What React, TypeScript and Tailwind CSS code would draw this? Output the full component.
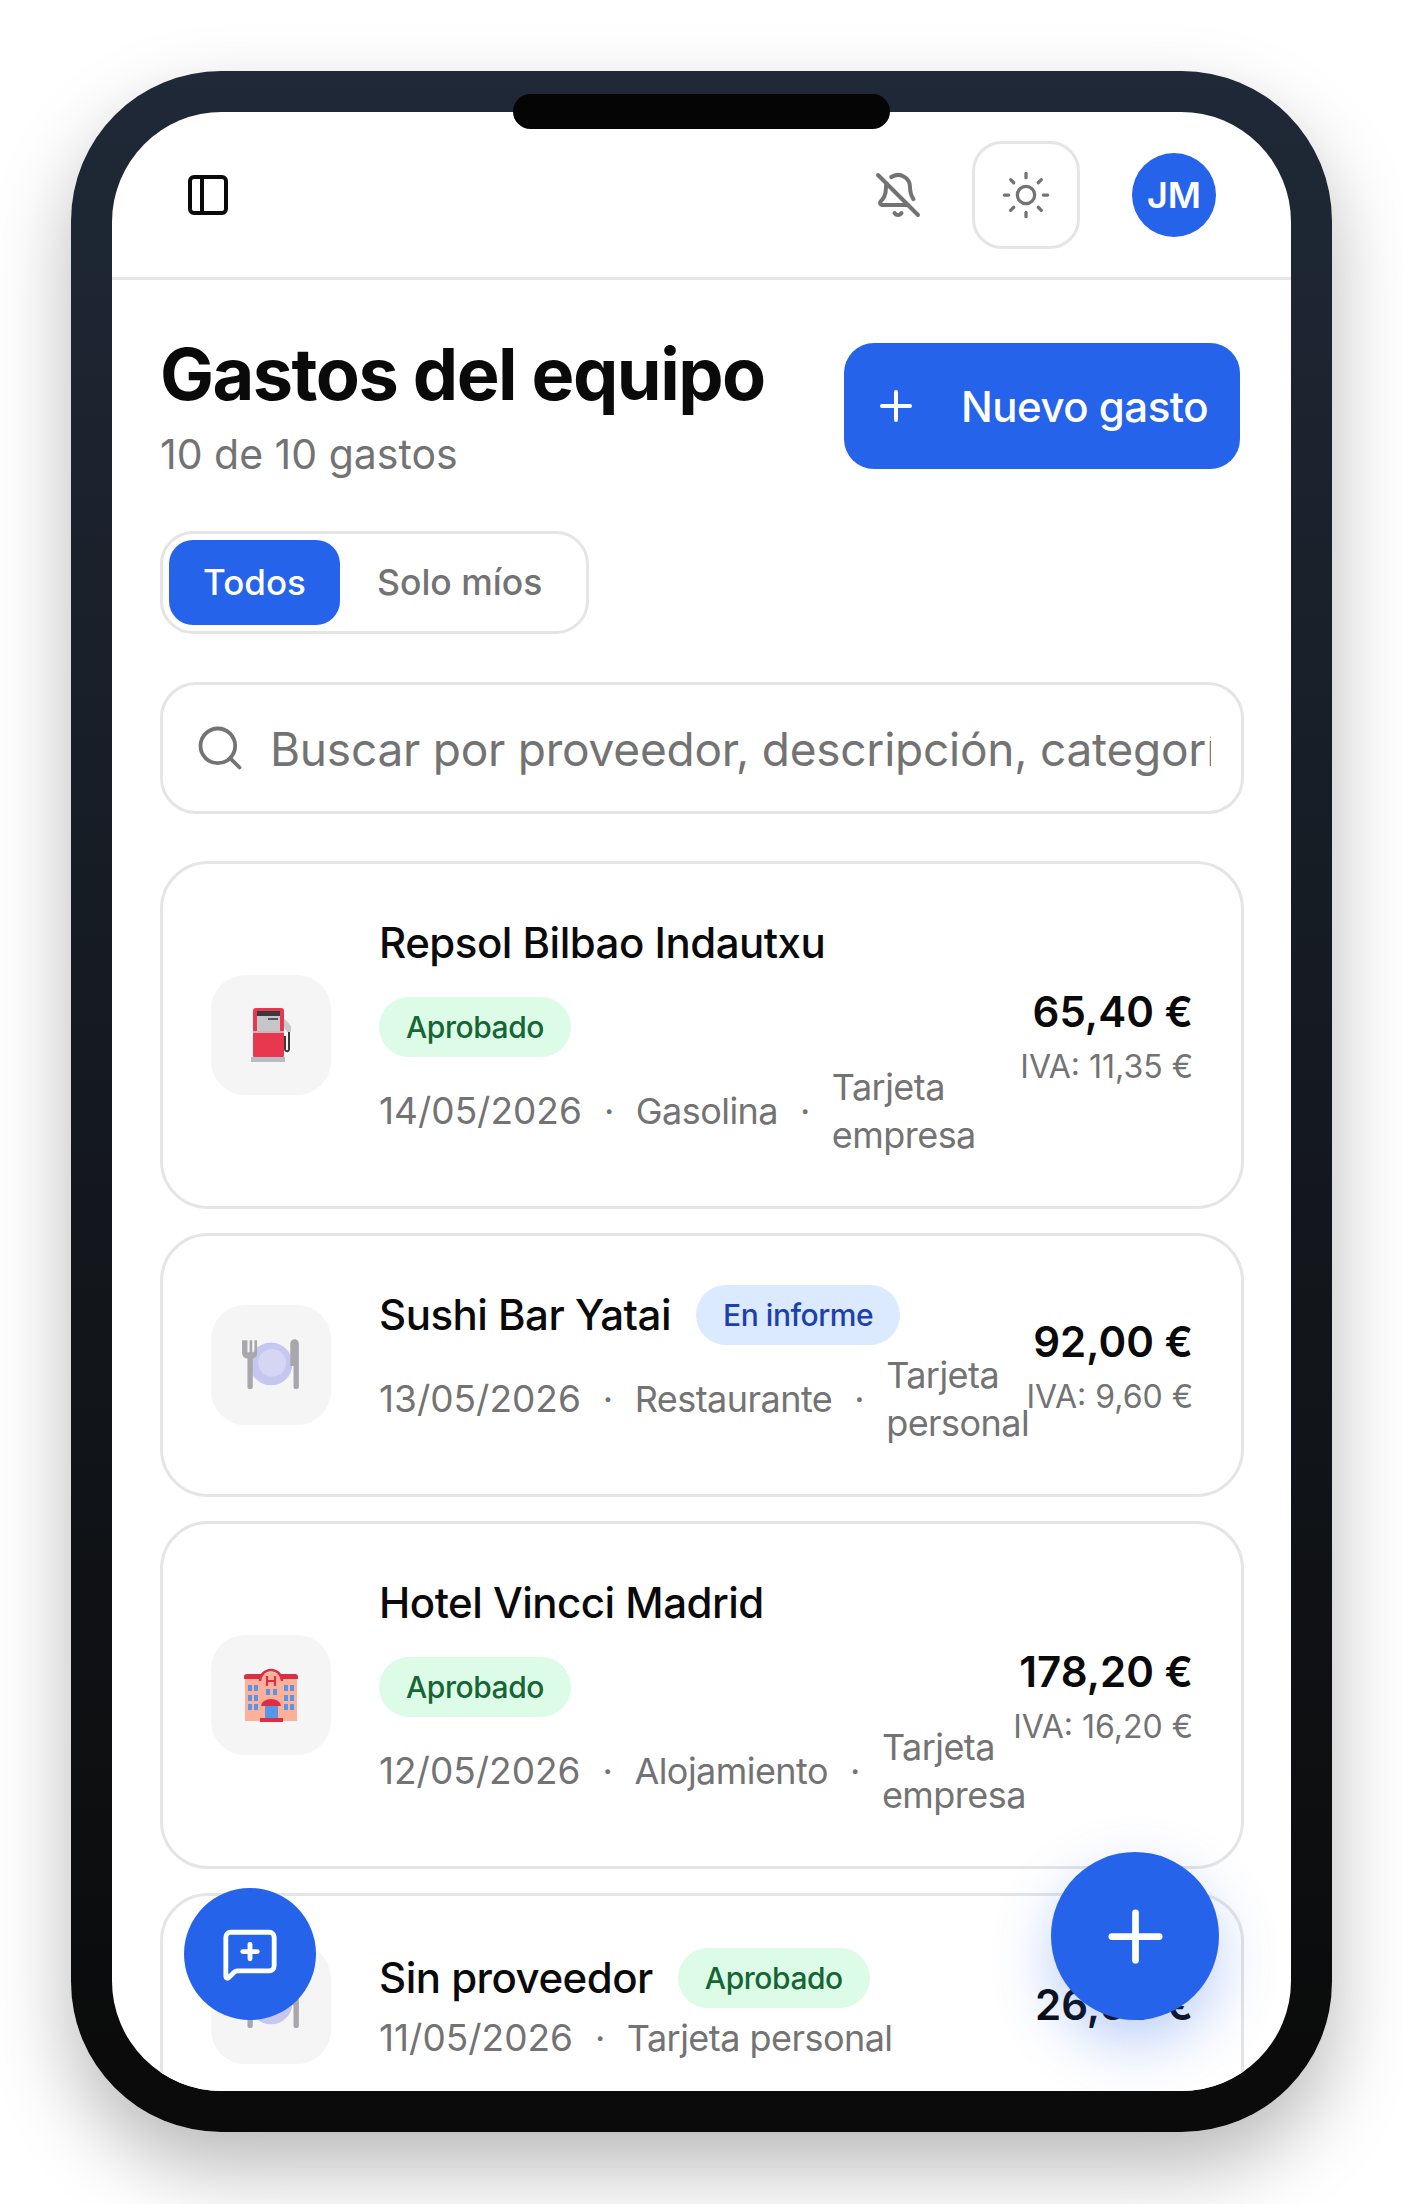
import { BellOff, MessageSquarePlus, PanelLeft, Plus, Search, Sun } from "lucide-react";

function PumpIcon() {
  return (
    <svg viewBox="0 0 42 56" className="h-[56px] w-[42px] translate-x-[1px]">
      <rect x="2" y="1" width="31" height="50" rx="3" fill="#e8384f" />
      <rect x="6" y="4" width="23" height="5" fill="#3a3a3c" />
      <rect x="6" y="9" width="23" height="15" fill="#c4c6ca" />
      <rect x="17" y="11" width="10" height="2" fill="#55565a" />
      <rect x="2" y="24" width="31" height="2" fill="#c9b3b5" />
      <rect y="50" width="34" height="5" fill="#b9bcc2" />
      <path d="M33 11l7 8v6h-4l-3-5z" fill="#c8cace" />
      <path d="M38 25v17a2 2 0 0 1-3 2 2 2 0 0 1-1-2V30h-1" fill="none" stroke="#3a3a3c" strokeWidth="2" />
    </svg>
  );
}

function PlateIcon() {
  return (
    <svg viewBox="0 0 56 50" className="h-[54px] w-[60px]">
      <circle cx="28" cy="24" r="20" fill="#c5c7ef" />
      <circle cx="29" cy="23" r="13" fill="#d4d6f4" />
      <path d="M1 2v12a5 5 0 0 0 5 5v26a2.500 2.500 0 0 0 5 0V19a5 5 0 0 0 4-5V2h-2.500v11h-2V2H8v11H6V2z" fill="#a8a8ac" />
      <path d="M46 5a4 4 0 0 1 8 0v40a2.500 2.500 0 0 1-5 0V26h-3z" fill="#a8a8ac" />
    </svg>
  );
}

function HotelIcon() {
  return (
    <svg viewBox="0 0 56 56" className="h-[56px] w-[56px]">
      <rect x="2" y="8" width="52" height="46" fill="#ffb09a" />
      <path d="M1 10a3 3 0 0 1 3-3h48a3 3 0 0 1 3 3v2H1z" fill="#db2f45" />
      <path d="M17 16a11 11 0 0 1 22 0v38H17z" fill="#ffb09a" />
      <path d="M17 14a11 11 0 0 1 22 0" fill="none" stroke="#db2f45" strokeWidth="2.500" />
      <path d="M24 9v10M32 9v10M24 14h8" stroke="#db2f45" strokeWidth="2.200" fill="none" />
      <rect x="5" y="18" width="4" height="6" fill="#5596e6" />
      <rect x="11" y="18" width="4" height="6" fill="#5596e6" />
      <rect x="5" y="28" width="4" height="6" fill="#5596e6" />
      <rect x="11" y="28" width="4" height="6" fill="#5596e6" />
      <rect x="5" y="37" width="4" height="6" fill="#5596e6" />
      <rect x="11" y="37" width="4" height="6" fill="#5596e6" />
      <rect x="41" y="18" width="4" height="6" fill="#5596e6" />
      <rect x="47" y="18" width="4" height="6" fill="#5596e6" />
      <rect x="41" y="28" width="4" height="6" fill="#5596e6" />
      <rect x="47" y="28" width="4" height="6" fill="#5596e6" />
      <rect x="41" y="37" width="4" height="6" fill="#5596e6" />
      <rect x="47" y="37" width="4" height="6" fill="#5596e6" />
      <rect x="23" y="22" width="4" height="6" fill="#5596e6" />
      <rect x="30" y="22" width="4" height="6" fill="#5596e6" />
      <rect x="22" y="38" width="13" height="14" fill="#5596e6" />
      <path d="M18 39a10 7 0 0 1 20 0z" fill="#db2f45" />
      <rect x="17" y="51" width="23" height="4" fill="#db2f45" />
    </svg>
  );
}

const expenses = [
  {
    vendor: "Repsol Bilbao Indautxu",
    status: "Aprobado",
    date: "14/05/2026",
    category: "Gasolina",
    payment: "Tarjeta empresa",
    amount: "65,40 €",
    vat: "IVA: 11,35 €",
    icon: <PumpIcon />,
    stacked: true,
  },
  {
    vendor: "Sushi Bar Yatai",
    status: "En informe",
    date: "13/05/2026",
    category: "Restaurante",
    payment: "Tarjeta personal",
    amount: "92,00 €",
    vat: "IVA: 9,60 €",
    icon: <PlateIcon />,
    stacked: false,
  },
  {
    vendor: "Hotel Vincci Madrid",
    status: "Aprobado",
    date: "12/05/2026",
    category: "Alojamiento",
    payment: "Tarjeta empresa",
    amount: "178,20 €",
    vat: "IVA: 16,20 €",
    icon: <HotelIcon />,
    stacked: true,
  },
  {
    vendor: "Sin proveedor",
    status: "Aprobado",
    date: "11/05/2026",
    category: "",
    payment: "Tarjeta personal",
    amount: "26,50 €",
    vat: "",
    icon: <PlateIcon />,
    stacked: false,
  },
];

function StatusBadge({ status }: { status: string }) {
  const approved = status === "Aprobado";
  return (
    <span
      className={`inline-flex h-[60px] shrink-0 items-center rounded-full px-[27px] text-[30px] font-medium tracking-[-0.015em] ${
        approved ? "bg-[#dcfce7] text-[#166534]" : "bg-[#dbeafe] text-[#1e40af]"
      }`}
    >
      {status}
    </span>
  );
}

function ExpenseCard({ item }: { item: (typeof expenses)[number] }) {
  return (
    <div className="flex shrink-0 items-center gap-[48px] rounded-[48px] border-[3px] border-[#e5e5e5] bg-white p-[48px]">
      <div className="flex h-[120px] w-[120px] shrink-0 items-center justify-center rounded-[34px] bg-[#f5f5f5]">
        {item.icon}
      </div>

      <div className="min-w-0 flex-1 translate-y-px">
        <div className={`flex ${item.stacked ? "flex-col items-start gap-[24px]" : "items-center gap-[25px]"}`}>
          <h3 className="text-[42px] leading-[60px] font-medium tracking-[-0.012em] whitespace-nowrap text-[#0a0a0a]">
            {item.vendor}
          </h3>
          <StatusBadge status={item.status} />
        </div>
        <div className="mt-[6px] flex items-center gap-[22px] text-[36px] leading-[48px] tracking-[-0.015em] text-[#737373]">
          <span className="text-[37px] tracking-normal whitespace-nowrap">{item.date}</span>
          <span>·</span>
          {item.category && <span className="whitespace-nowrap">{item.category}</span>}
          {item.category && <span>·</span>}
          <span className={item.category ? "" : "whitespace-nowrap"}>{item.payment}</span>
        </div>
      </div>

      <div className="shrink-0 translate-y-px text-right">
        <p className="text-[42px] leading-[60px] font-semibold whitespace-nowrap text-[#0a0a0a]">{item.amount}</p>
        {item.vat && (
          <p className="mt-px text-[32px] leading-[48px] whitespace-nowrap text-[#737373]">{item.vat}</p>
        )}
      </div>
    </div>
  );
}

export default function App() {
  return (
    <div className="h-[2204px] w-[1403px] overflow-hidden bg-white pt-[71px] pl-[71px] font-['Inter',sans-serif]">
      {/* phone frame */}
      <div className="relative h-[2061px] w-[1261px] rounded-[150px] bg-gradient-to-b from-[#1f2937] to-[#0a0a0a] p-[41px] shadow-[0_36px_80px_rgba(0,0,0,0.28)]">
        <div className="absolute top-[23px] left-[442px] z-20 h-[35px] w-[377px] rounded-full bg-[#050505]" />

        <div className="relative flex h-full flex-col overflow-hidden rounded-[110px] bg-white">
          <header className="flex h-[168px] shrink-0 items-center justify-between border-b-[3px] border-[#e5e5e5] pr-[75px] pl-[72px]">
            <PanelLeft size={48} strokeWidth={2} className="text-[#0a0a0a]" />
            <div className="flex items-center gap-[52px]">
              <BellOff size={48} strokeWidth={2} className="-mr-[2px] text-[#737373]" />
              <div className="flex h-[108px] w-[108px] items-center justify-center rounded-[30px] border-[3px] border-[#e5e5e5]">
                <Sun size={52} strokeWidth={1.5} className="text-[#737373]" />
              </div>
              <div className="flex h-[84px] w-[84px] items-center justify-center rounded-full bg-[#2563eb] text-[36px] font-semibold text-white">
                JM
              </div>
            </div>
          </header>

          <main className="flex min-h-0 flex-1 flex-col pt-[56px] pr-[47px] pl-[48px]">
            <div className="flex items-start justify-between pr-[4px]">
              <div>
                <h1 className="text-[72px] leading-[76px] font-bold tracking-[-0.021em] text-[#0a0a0a]">Gastos del equipo</h1>
                <p className="mt-[17px] text-[41px] leading-[50px] text-[#737373]">10 de 10 gastos</p>
              </div>
              <button className="mt-[7px] flex h-[126px] w-[396px] items-center gap-[41px] rounded-[30px] bg-[#2563eb] pl-[28px] text-[42px] font-medium tracking-[-0.012em] text-white">
                <Plus size={48} strokeWidth={2} />
                Nuevo gasto
              </button>
            </div>

            <div className="mt-[52px] flex h-[103px] w-[429px] shrink-0 items-center gap-[37px] rounded-[33px] border-[3px] border-[#e5e5e5] pl-[6px]">
              <span className="flex h-[85px] w-[171px] items-center justify-center rounded-[24px] bg-[#2563eb] text-[35px] font-medium text-white">
                Todos
              </span>
              <span className="text-[35.5px] font-medium text-[#737373]">Solo míos</span>
            </div>

            <div className="mt-[48px] flex h-[132px] shrink-0 items-center gap-[24px] rounded-[36px] border-[3px] border-[#e5e5e5] pr-[30px] pl-[31px]">
              <Search size={52} strokeWidth={1.75} className="shrink-0 text-[#737373]" />
              <input
                readOnly
                placeholder="Buscar por proveedor, descripción, categoría..."
                className="min-w-0 flex-1 translate-y-px bg-transparent text-[46px] tracking-[-0.005em] outline-none placeholder:text-[#737373]"
              />
            </div>

            <div className="mt-[47px] flex flex-col gap-[24px]">
              {expenses.map((item) => (
                <ExpenseCard key={item.vendor} item={item} />
              ))}
            </div>
          </main>

          {/* floating buttons */}
          <button className="absolute top-[1776px] left-[72px] z-10 flex h-[132px] w-[132px] items-center justify-center rounded-full bg-[#2563eb] text-white">
            <MessageSquarePlus size={58} strokeWidth={2} />
          </button>
          <button className="absolute top-[1740px] left-[939px] z-10 flex h-[168px] w-[168px] items-center justify-center rounded-full bg-[#2563eb] text-white shadow-[0_24px_60px_rgba(37,99,235,0.3)]">
            <Plus size={81} strokeWidth={2} />
          </button>
        </div>
      </div>
    </div>
  );
}
